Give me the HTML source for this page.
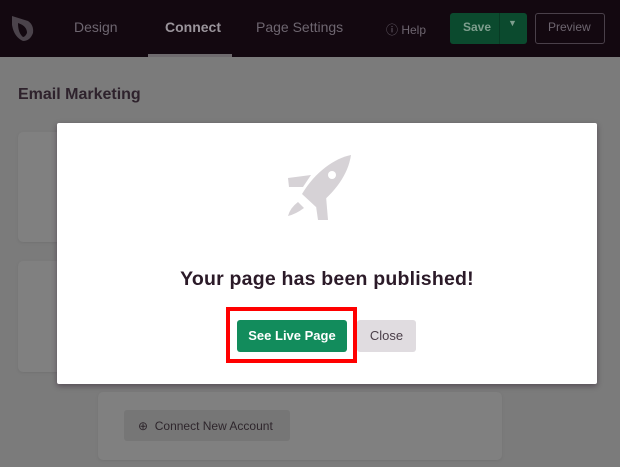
<!DOCTYPE html>
<html><head><meta charset="utf-8"><style>
*{box-sizing:border-box;margin:0;padding:0}
body{width:620px;height:467px;overflow:hidden;background:#7b7b7b;font-family:"Liberation Sans",sans-serif;position:relative}
.nav{position:absolute;left:0;top:0;width:620px;height:57px;background:#130810}
.nav span{position:absolute;top:19px;font-size:14px;color:#6e6670}
.card{position:absolute;background:#808080;border-radius:5px;box-shadow:0 1px 3px rgba(0,0,0,.08)}
.modal{position:absolute;left:57px;top:123px;width:540px;height:261px;background:#fff;border-radius:2px;box-shadow:0 2px 6px rgba(40,20,40,.45)}
</style></head><body>
<div class="nav">
<svg style="position:absolute;left:10px;top:13px" width="24" height="30" viewBox="0 0 24 30"><path d="M2 3 L18 8 Q24 12 23 20 Q20 28 13 28 Q4 24 2 12 Z" fill="#4b434b"/><path d="M8 10 Q17 13 17 20 Q15 24 13 24 Q8 20 8 10Z" fill="#130810"/></svg>
<span style="left:74px">Design</span>
<span style="left:165px;color:#9a949b;font-weight:bold">Connect</span>
<div style="position:absolute;left:148px;top:54px;width:84px;height:3px;background:#6e6a6e"></div>
<span style="left:256px">Page Settings</span>
<span style="left:386px;font-size:12px;top:21px">&#9432; Help</span>
<div style="position:absolute;left:450px;top:13px;width:77px;height:31px;background:#0b4a2e;border-radius:3px"></div>
<div style="position:absolute;left:499px;top:13px;width:1px;height:31px;background:#083a24"></div>
<span style="left:463px;top:20px;font-size:12px;font-weight:bold;color:#7e9e8e">Save</span>
<span style="left:508px;top:18px;font-size:9px;color:#7e9e8e">&#9660;</span>
<div style="position:absolute;left:535px;top:13px;width:70px;height:31px;border:1px solid #4a404a;border-radius:3px"></div>
<span style="left:548px;top:20px;font-size:12px">Preview</span>
</div>
<div style="position:absolute;left:18px;top:86px;font-size:16px;font-weight:bold;color:#2e222c">Email Marketing</div>
<div class="card" style="left:18px;top:132px;width:60px;height:110px"></div>
<div class="card" style="left:18px;top:261px;width:60px;height:111px"></div>
<div class="card" style="left:98px;top:392px;width:404px;height:68px"></div>
<div style="position:absolute;left:124px;top:410px;width:166px;height:31px;background:#767676;border-radius:3px;font-size:12px;color:#2e262c;padding:9px 0 0 14px">&#8853;&nbsp; Connect New Account</div>
<div class="modal">
<svg style="position:absolute;left:223px;top:27px" width="80" height="75" viewBox="0 0 80 75">
<g fill="#d6d2d6">
<path d="M71 5 C55 8 35 22 22 44 L36 57 C55 42 68 25 71 5Z"/>
<path d="M8 28 L31 25 L23 37 L9 37Z"/>
<path d="M46 46 L48 70 L38 70 L36 56Z"/>
<path d="M18 52 Q10 58 8 66 Q16 64 24 58 Z"/>
</g>
<circle cx="52" cy="25" r="4" fill="#fff"/>
</svg>
<div style="position:absolute;left:0;top:145px;width:540px;text-align:center;font-size:19.5px;font-weight:bold;color:#2b1a28;letter-spacing:.2px">Your page has been published!</div>
<div style="position:absolute;left:169px;top:184px;width:131px;height:56px;border:4px solid #f00"></div>
<div style="position:absolute;left:180px;top:197px;width:110px;height:32px;background:#128c5c;border-radius:3px;color:#fff;font-size:13px;font-weight:bold;text-align:center;line-height:32px">See Live Page</div>
<div style="position:absolute;left:300px;top:197px;width:59px;height:32px;background:#e0dce0;border-radius:3px;color:#4a3e48;font-size:13px;text-align:center;line-height:32px">Close</div>
</div>
</body></html>
